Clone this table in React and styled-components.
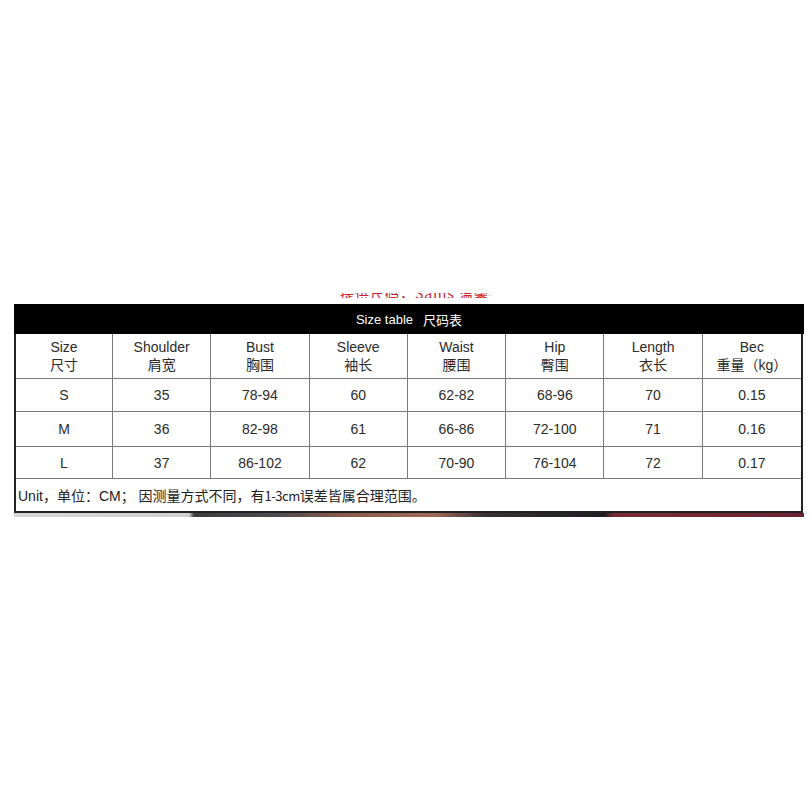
import React from "react";
import styled, { createGlobalStyle } from "styled-components";

const Global = createGlobalStyle`
  html, body { margin: 0; padding: 0; background: #fff; }
  body { font-family: "Liberation Sans", Arial, "Noto Sans CJK SC", sans-serif; color: #222; }
`;

const Page = styled.div`
  width: 812px;
  height: 812px;
  padding-top: 293px;
  box-sizing: border-box;
  padding-left: 14px;
`;

const Caption = styled.div`
  height: 5px;
  overflow: hidden;
  margin-left: 326px;
  margin-bottom: 6px;
  width: 150px;
  display: flex;
  align-items: flex-end;
`;

const CaptionText = styled.span`
  color: #c8232c;
  font-size: 14px;
  line-height: 14px;
  margin-bottom: -2px;
  letter-spacing: 1px;
  white-space: nowrap;
  font-family: "Noto Sans CJK SC", sans-serif;
`;

const TitleBar = styled.div`
  width: 790px;
  height: 30px;
  background: #000;
  color: #fff;
  display: flex;
  align-items: center;
  justify-content: center;
  font-size: 13px;
  gap: 10px;
  font-family: "Liberation Sans", Arial, "Noto Sans CJK SC", sans-serif;
`;

const Table = styled.div`
  width: 789px;
  box-sizing: border-box;
  border-left: 2px solid #222;
  border-right: 2px solid #222;
  border-bottom: 2px solid #222;
  display: grid;
  grid-template-columns: 97px repeat(7, 1fr);
`;

const Cell = styled.div`
  box-sizing: border-box;
  height: ${(p) => p.$h}px;
  border-right: ${(p) => (p.$last ? "none" : "1px solid #7a7a7a")};
  border-bottom: 1px solid #7a7a7a;
  display: flex;
  flex-direction: column;
  align-items: center;
  justify-content: center;
  font-size: 14px;
  line-height: 18px;
  color: #2a2a2a;
`;

const Note = styled.div`
  grid-column: 1 / -1;
  height: 32px;
  display: flex;
  align-items: center;
  padding-left: 2px;
  font-size: 14px;
  color: #222;
  white-space: nowrap;
  font-family: "Liberation Sans", Arial, "Noto Sans CJK SC", sans-serif;
`;

const Mono = styled.span`
  font-family: "Noto Sans CJK SC", sans-serif;
  font-size: 13px;
  letter-spacing: -0.5px;
`;

const Strip = styled.div`
  width: 790px;
  height: 4px;
  background: linear-gradient(
    to right,
    #d6d6d6 0px,
    #d0d0d0 175px,
    #3c3c40 180px,
    #4a4a50 260px,
    #8a5a48 330px,
    #a06a58 420px,
    #3a3035 470px,
    #1f1d22 590px,
    #7a2a35 600px,
    #6a2430 790px
  );
`;

const headers = [
  ["Size", "尺寸"],
  ["Shoulder", "肩宽"],
  ["Bust", "胸围"],
  ["Sleeve", "袖长"],
  ["Waist", "腰围"],
  ["Hip", "臀围"],
  ["Length", "衣长"],
  ["Bec", "重量（kg）"],
];

const rows = [
  { h: 33, v: ["S", "35", "78-94", "60", "62-82", "68-96", "70", "0.15"] },
  { h: 35, v: ["M", "36", "82-98", "61", "66-86", "72-100", "71", "0.16"] },
  { h: 32, v: ["L", "37", "86-102", "62", "70-90", "76-104", "72", "0.17"] },
];

export default function App() {
  return (
    <>
      <Global />
      <Page>
        <Caption>
          <CaptionText>提供尺码，Sams 温馨提示</CaptionText>
        </Caption>
        <TitleBar>
          <span>Size table</span>
          <span>尺码表</span>
        </TitleBar>
        <Table>
          {headers.map(([en, zh], i) => (
            <Cell key={en} $h={45} $last={i === 7}>
              <span>{en}</span>
              <span>{zh}</span>
            </Cell>
          ))}
          {rows.map((r) =>
            r.v.map((val, i) => (
              <Cell key={r.v[0] + i} $h={r.h} $last={i === 7}>
                {val}
              </Cell>
            ))
          )}
          <Note>
            Unit，单位：CM；&nbsp;因测量方式不同，有<Mono>1-3cm</Mono>误差皆属合理范围。
          </Note>
        </Table>
        <Strip />
      </Page>
    </>
  );
}
